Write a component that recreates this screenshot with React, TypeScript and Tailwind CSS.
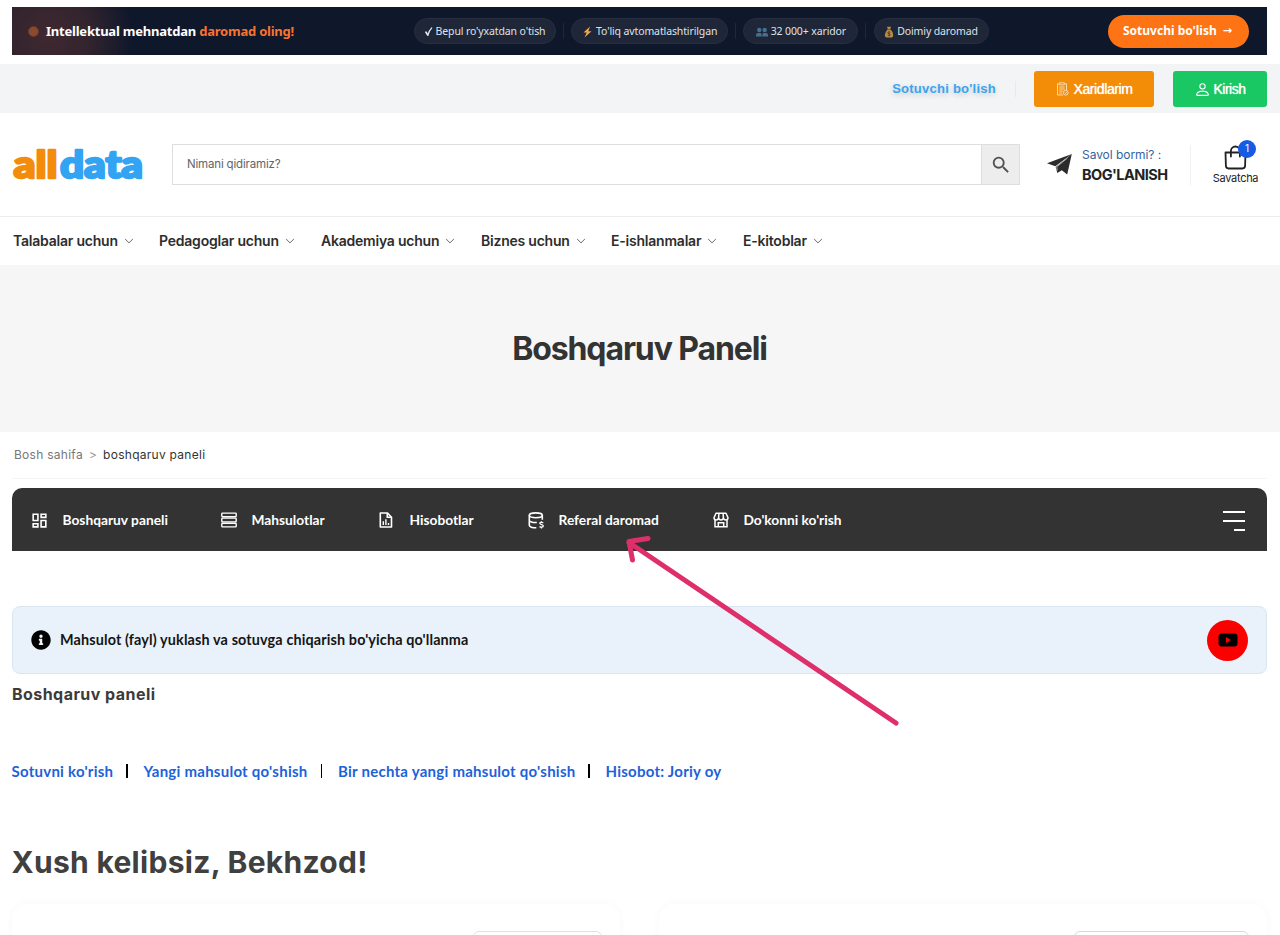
import React from 'react';
import { BsChevronDown, BsPerson } from 'react-icons/bs';
import { MdOutlineDashboard, MdSearch } from 'react-icons/md';
import { FaInfoCircle } from 'react-icons/fa';

function Logo() {
  return (
    <svg
      width="140"
      height="60"
      viewBox="0 0 140 60"
      aria-label="alldata"
      fontFamily="Lato, sans-serif"
      fontWeight="900"
      fontSize="38"
      strokeWidth="2.4"
      strokeLinejoin="round"
    >
      <text x="1.500" y="42.500" textLength="44" lengthAdjust="spacingAndGlyphs" fill="#f28c0a" stroke="#f28c0a">all</text>
      <text x="48" y="42.500" textLength="83" lengthAdjust="spacingAndGlyphs" fill="#33a3f4" stroke="#33a3f4">data</text>
    </svg>
  );
}

function CheckIcon() {
  return (
    <svg width="8" height="11" viewBox="0 0 8 11" fill="none" stroke="#dfe3e9" strokeLinecap="round">
      <path d="M1 6.300 2.800 9" strokeWidth="1.800" />
      <path d="M2.900 9Q4.300 4.300 6.700 2" strokeWidth="1.200" />
    </svg>
  );
}

function BoltIcon() {
  return (
    <svg width="11" height="12" viewBox="0 0 10 12">
      <path d="M7.5 0.5 1 6.5h3.2L2 11.5 9 5.2H5.8z" fill="#f2a74b" />
    </svg>
  );
}

function PeopleIcon() {
  return (
    <svg width="12" height="12" viewBox="0 0 12 12" fill="#45708f">
      <circle cx="3.3" cy="4" r="2.2" />
      <circle cx="8.7" cy="4" r="2.2" />
      <path d="M0 10.5V9q0-2 2-2h2.2q1.5 0 1.5 2v1.5zM6.3 10.5V9q0-2 1.5-2H10q2 0 2 2v1.5z" />
    </svg>
  );
}

function MoneyBagIcon() {
  return (
    <svg width="10" height="12" viewBox="0 0 10 12">
      <path d="M3 .8h4L6.3 3h-2.600zM3.500 3.500h3Q9.500 6.200 9.200 9T7.500 11.500h-5Q.8 11.400.8 9t2.700-5.500z" fill="#b98c45" />
      <path d="M6.300 6.300q-2.600-1-2.600.4c0 1.300 2.700.7 2.700 2 0 1.200-2 1-2.800.4M5 5.300v5" stroke="#4d3b24" strokeWidth=".8" fill="none" />
    </svg>
  );
}

function ClipboardIcon() {
  return (
    <svg width="13" height="14" viewBox="0 0 13 14" fill="none" stroke="#fff" strokeWidth=".8" opacity=".85">
      <path d="M7 13H1.500V1.800H3M8.500 1.800H10.500V8" />
      <path d="M3.300.8h5v2h-5zM3.200 5h5.500M3.200 7h5.500M3.200 9h3.500M3.200 11H6" />
      <circle cx="9.700" cy="10.700" r="2.400" />
      <path d="m8.700 10.700.8.8 1.300-1.500" />
    </svg>
  );
}

function PlaneIcon() {
  return (
    <svg width="26" height="23" viewBox="0 0 26 23" fill="#2b2b2b">
      <path d="M0 10.300 24.800 1 8.300 13.300z" />
      <path d="M24.800 1 20.200 21.500 14.800 17.300 10.300 20 8.700 13.900z" />
      <path d="M20.500 5 9.800 13.800 10.200 17.500" fill="none" stroke="#fff" strokeWidth=".6" />
    </svg>
  );
}

function BagIcon() {
  return (
    <svg width="23" height="25" viewBox="0 0 23 25" fill="none" stroke="#222" strokeWidth="1.800">
      <path d="M1.500 7.500h20l-.4 13.300q-.1 2.700-2.700 2.700H4.600q-2.600 0-2.700-2.700z" strokeLinejoin="round" />
      <path d="M6.900 11.500V6a4.500 4.500 0 0 1 9 0v5.500" strokeLinecap="round" />
    </svg>
  );
}

function RowsIcon() {
  return (
    <svg width="16" height="16" viewBox="0 0 16 16" fill="none" stroke="#fff" strokeWidth="1.400">
      <rect x=".8" y="1.100" width="14.400" height="3.700" rx=".7" />
      <rect x=".8" y="6.150" width="14.400" height="3.700" rx=".7" />
      <rect x=".8" y="11.200" width="14.400" height="3.700" rx=".7" />
    </svg>
  );
}

function ReportIcon() {
  return (
    <svg width="14" height="16" viewBox="0 0 14 16" fill="none" stroke="#fff" strokeWidth="1.600">
      <path d="M1.300 1h7.200l4 4.200V15H1.300z" strokeLinejoin="round" />
      <path d="M8.300 1v4.300h4.200" />
      <path d="M4.300 13V9.300M6.900 13V7.300M9.500 13v-2" strokeWidth="1.400" />
    </svg>
  );
}

function CoinsIcon() {
  return (
    <svg width="17" height="17" viewBox="0 0 17 17" fill="none" stroke="#fff" strokeWidth="1.600">
      <ellipse cx="7.800" cy="3.300" rx="6.500" ry="2.400" />
      <path d="M1.300 3.300v10c0 1.500 3 2.600 7 2.500M14.300 3.300v4.500M1.300 8.200c0 1.500 3 2.500 7.500 2.300" />
      <path d="M15.300 10.700q-3.500-1-3.500.6c0 1.600 3.500.9 3.500 2.600 0 1.500-2.400 1.300-3.800.7M13.500 9.300v1.200M13.500 15v1.500" strokeWidth="1.300" />
    </svg>
  );
}

function StoreIcon() {
  return (
    <svg width="16" height="16" viewBox="0 0 16 16" fill="none" stroke="#fff" strokeWidth="1.500">
      <path d="M3 1.300h10l2 4.500c0 2.700-3.600 2.800-4.600.6-.9 2-3.900 2-4.800 0-1 2.200-4.600 2.100-4.600-.6z" strokeLinejoin="round" />
      <path d="M5.900 1.300 5.600 6.400M10.100 1.300l.3 5.100M2 8v6.700h12V8M5.300 14.500v-3.800h5.400v3.800" />
    </svg>
  );
}

const perks = [
  { icon: <CheckIcon />, text: "Bepul ro'yxatdan o'tish", width: 'w-[142px]' },
  { icon: <BoltIcon />, text: "To'liq avtomatlashtirilgan", width: 'w-[157px]' },
  { icon: <PeopleIcon />, text: '32 000+ xaridor', width: 'w-[115px]' },
  { icon: <MoneyBagIcon />, text: 'Doimiy daromad', width: 'w-[115px]' },
];

const categories = [
  { label: 'Talabalar uchun', width: 'w-[146px]' },
  { label: 'Pedagoglar uchun', width: 'w-[162px]' },
  { label: 'Akademiya uchun', width: 'w-[160px]' },
  { label: 'Biznes uchun', width: 'w-[130px]' },
  { label: 'E-ishlanmalar', width: 'w-[132px]' },
  { label: 'E-kitoblar', width: 'w-[90px]' },
];

const panelLinks = [
  { icon: <MdOutlineDashboard size={19} className="-ml-0.5" />, label: 'Boshqaruv paneli', width: 'w-[189px]' },
  { icon: <RowsIcon />, label: 'Mahsulotlar', width: 'w-[158px]' },
  { icon: <ReportIcon />, label: 'Hisobotlar', width: 'w-[149px]' },
  { icon: <CoinsIcon />, label: 'Referal daromad', width: 'w-[185px]' },
  { icon: <StoreIcon />, label: "Do'konni ko'rish", width: 'w-[160px]' },
];

function PromoBanner() {
  return (
    <div className="mx-3 mr-[13px] mt-[7px] flex h-12 items-center bg-[#0f172b] bg-[radial-gradient(circle_at_36px_28px,#40282e_0px,#32242e_42px,transparent_85px)] font-['Noto_Sans',sans-serif]">
      <div className="flex w-[402px] items-center pl-4">
        <span className="mr-[7px] size-[11px] rounded-full border border-[#653a30] bg-[#8b4a2c]" />
        <p className="whitespace-nowrap pt-px text-[13px] font-bold tracking-[-0.22px] text-white">
          Intellektual mehnatdan <span className="text-[#f97330]">daromad oling!</span>
        </p>
      </div>
      <div className="flex items-center">
        {perks.map((perk, i) => (
          <React.Fragment key={perk.text}>
            {i > 0 && <span className="mx-[7.1px] h-4 w-px bg-[#1f2739]" />}
            <span
              className={`flex h-[26px] items-center justify-center gap-[3px] whitespace-nowrap rounded-full border border-[#272e40] bg-[#1f2638] pt-px text-[10.5px] tracking-[-0.12px] text-[#dfe3e9] ${perk.width}`}
            >
              {perk.icon}
              {perk.text}
            </span>
          </React.Fragment>
        ))}
      </div>
      <button className="ml-auto mr-[18px] flex h-[33px] w-[141px] items-center justify-center gap-1.5 rounded-full bg-[#fe7415] pr-0.5 font-['Noto_Sans','DejaVu_Sans',sans-serif] text-[12px] font-bold text-white">
        Sotuvchi bo'lish <span className="font-['DejaVu_Sans',sans-serif] text-[11px]">→</span>
      </button>
    </div>
  );
}

function TopBar() {
  return (
    <div className="mt-[9px] flex h-[49px] items-center justify-end bg-[#f3f4f6] pr-[13px] font-['Liberation_Sans',sans-serif]">
      <a className="text-[13px] font-bold tracking-[0.25px] text-[#39a4ee] [text-shadow:0_2px_6px_rgba(0,0,0,0.2)]">Sotuvchi bo'lish</a>
      <span className="ml-[19px] mr-[18px] h-4 w-px bg-[#e8e9eb]" />
      <button className="flex h-9 w-[120px] items-center justify-center gap-1 rounded-[3px] bg-[#f38c07] pl-px pt-px text-[14px] tracking-[-0.4px] text-white [text-shadow:0_0_1px_#fff]">
        <ClipboardIcon /> Xaridlarim
      </button>
      <button className="ml-[19px] flex h-9 w-[94px] items-center justify-center gap-0.5 rounded-[3px] bg-[#19c763] pt-px text-[14px] tracking-[-0.5px] text-white [text-shadow:0_0_1px_#fff]">
        <BsPerson size={17} /> Kirish
      </button>
    </div>
  );
}

function Header() {
  return (
    <header className="flex h-[103px] items-center pl-3">
      <div className="w-40"><Logo /></div>
      <div className="flex h-[41px] w-[848px] border border-[#dedede]">
        <input
          className="min-w-0 flex-1 pl-3.5 text-[11.5px] tracking-[-0.17px] outline-none placeholder:text-[#656565]"
          placeholder="Nimani qidiramiz?"
        />
        <button className="flex w-[38px] items-center justify-center border-l border-[#dedede] bg-[#ededed] text-[#505050]" aria-label="Qidirish">
          <MdSearch size={22} />
        </button>
      </div>
      <div className="ml-[27px] flex h-10 w-[144px] items-center gap-[9px] border-r border-[#f0f0f0]">
        <PlaneIcon />
        <div className="whitespace-nowrap">
          <p className="text-[12px] leading-5 tracking-[-0.05px] text-[#35639f]">Savol bormi? :</p>
          <p className="text-[14.5px] font-bold leading-5 tracking-[-0.55px] text-[#222]">BOG'LANISH</p>
        </div>
      </div>
      <div className="relative ml-[21px] flex w-[47px] flex-col items-center pt-0.5">
        <BagIcon />
        <span className="text-[11px] leading-[17px] tracking-[-0.3px] text-[#222]">Savatcha</span>
        <span className="absolute -top-[3px] left-[26px] flex size-[18px] items-center justify-center rounded-full bg-[#175be5] text-[10px] text-white">1</span>
      </div>
    </header>
  );
}

export default function App() {
  return (
    <div className="relative flex h-[935px] w-[1280px] flex-col overflow-hidden bg-white font-['Inter',sans-serif] [&>*]:shrink-0">
      <PromoBanner />
      <TopBar />
      <Header />

      <nav className="flex h-[49px] items-center border-t border-[#ececec] pb-px pl-[13px]">
        {categories.map((item) => (
          <a key={item.label} className={`flex items-center gap-1.5 whitespace-nowrap text-[14px] font-semibold tracking-[-0.22px] text-[#2d2d2d] ${item.width}`}>
            {item.label}
            <BsChevronDown size={10} />
          </a>
        ))}
      </nav>

      <div className="flex h-[167px] items-center justify-center bg-[#f6f6f6] pr-px">
        <h1 className="text-[32px] font-bold tracking-[-1.1px] text-[#333]">Boshqaruv Paneli</h1>
      </div>

      <div className="mx-3 mr-[13px] flex h-[47px] items-center gap-1.5 border-b border-[#f5f5f5] pl-[2px] text-[12px] tracking-[0.27px]">
        <span className="text-[#777]">Bosh sahifa</span>
        <span className="text-[#999]">&gt;</span>
        <span className="text-[#333]">boshqaruv paneli</span>
      </div>

      <div className="mx-3 mr-[13px] mt-[9px] flex h-[63px] items-center rounded-t-[10px] bg-[#333] pl-5 pt-px font-['Lato',sans-serif] text-white">
        {panelLinks.map((link) => (
          <a key={link.label} className={`flex items-center whitespace-nowrap text-[13.75px] font-bold ${link.width}`}>
            <span className="w-[30.5px]">{link.icon}</span>
            {link.label}
          </a>
        ))}
        <button className="ml-auto mr-[22px] flex w-[22px] flex-col items-end gap-[7px] pt-px" aria-label="Menyu">
          <span className="h-0.5 w-[22px] bg-white" />
          <span className="h-0.5 w-[22px] bg-white" />
          <span className="h-0.5 w-[11px] bg-white" />
        </button>
      </div>

      <div className="mx-3 mr-[13px] mt-[55px] flex h-[68px] items-center rounded-lg border border-[#d9e6f0] bg-[#e9f1fb] pl-[18px] pr-[18px] font-['Lato',sans-serif]">
        <FaInfoCircle size={20} />
        <p className="ml-[9px] text-[14.4px] font-bold tracking-[0.13px] text-[#151515]">Mahsulot (fayl) yuklash va sotuvga chiqarish bo'yicha qo'llanma</p>
        <span className="ml-auto flex size-[41px] items-center justify-center rounded-full bg-[#fc0000]">
          <svg width="20" height="14" viewBox="0 0 20 14">
            <rect x=".5" y=".5" width="19" height="13" rx="3" />
            <path d="M8 4v6l5-3z" fill="#fc0000" />
          </svg>
        </span>
      </div>

      <h2 className="ml-3 mt-2 text-[16px] font-bold leading-6 tracking-[0.45px] text-[#3b3b3b]">Boshqaruv paneli</h2>

      <div className="mt-[55px] flex h-5 items-center pl-[11.5px] font-['Lato',sans-serif] text-[15px] font-bold tracking-[0.25px] text-[#1d62d9]">
        <a className="w-[102.5px] whitespace-nowrap">Sotuvni ko'rish</a>
        <span className="ml-3 mr-4 h-3.5 w-[1.5px] bg-black" />
        <a className="w-[165px] whitespace-nowrap">Yangi mahsulot qo'shish</a>
        <span className="ml-3 mr-4 h-3.5 w-[1.5px] bg-black" />
        <a className="w-[238px] whitespace-nowrap">Bir nechta yangi mahsulot qo'shish</a>
        <span className="ml-3 mr-4 h-3.5 w-[1.5px] bg-black" />
        <a className="whitespace-nowrap">Hisobot: Joriy oy</a>
      </div>

      <h2 className="ml-[11.5px] mt-[61px] text-[30px] font-bold leading-10 tracking-[0.3px] text-[#404040]">Xush kelibsiz, Bekhzod!</h2>

      <div className="mx-3 mr-[13px] mt-[22px] flex justify-between">
        <section className="flex h-40 w-[608px] justify-end rounded-[15px] bg-white pr-[18px] pt-[27px] shadow-[0_0_10px_rgba(0,0,0,0.03)]">
          <div className="h-9 w-[129px] rounded-md border border-[#dfe1e6]" />
        </section>
        <section className="flex h-40 w-[608px] justify-end rounded-[15px] bg-white pr-[18px] pt-[27px] shadow-[0_0_10px_rgba(0,0,0,0.03)]">
          <div className="h-9 w-[175px] rounded-md border border-[#d3dbe0]" />
        </section>
      </div>

      {/* pointer to the referral income tab */}
      <svg className="pointer-events-none absolute left-[619px] top-[530px]" width="290" height="205" viewBox="0 0 290 205" fill="none" stroke="#de2f6b" strokeWidth="5" strokeLinecap="round" strokeLinejoin="round">
        <path d="M277 193 10 12.500M29 8.500 10 11.500 13.500 30" />
      </svg>
    </div>
  );
}
